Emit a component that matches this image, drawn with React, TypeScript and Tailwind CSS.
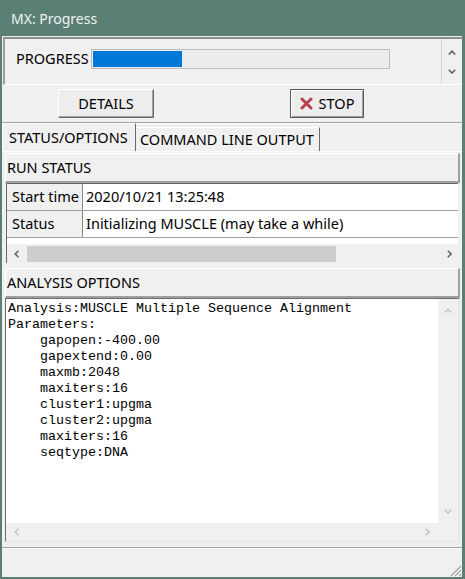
import React from "react";

type Dir = "up" | "down" | "left" | "right";

const arrowPaths: Record<Dir, string> = {
  up: "M0.8 4.5 L4 1.2 L7.2 4.5",
  down: "M0.8 0.8 L4 4.1 L7.2 0.8",
  left: "M4.5 0.8 L1.2 4 L4.5 7.2",
  right: "M0.8 0.8 L4.1 4 L0.8 7.2",
};

const Arrow = ({ dir, color }: { dir: Dir; color: string }) => {
  const vertical = dir === "up" || dir === "down";
  return (
    <svg
      width={vertical ? 8 : 5}
      height={vertical ? 5 : 8}
      viewBox={vertical ? "0 0 8 5" : "0 0 5 8"}
      fill="none"
      stroke={color}
      strokeWidth="1.5"
    >
      <path d={arrowPaths[dir]} />
    </svg>
  );
};

const SectionHeader = ({ title }: { title: string }) => (
  <div className="h-[30px] shrink-0 flex items-center pl-[1px] border-t border-l border-t-white border-l-white border-b-2 border-r-2 border-b-[#a0a0a0] border-r-[#a0a0a0]">
    {title}
  </div>
);

const InfoRow = ({ label, value }: { label: string; value: string }) => (
  <div className="h-[27px] flex border-b border-[#a0a0a0]">
    <div className="w-[76px] shrink-0 bg-[#f0f0f0] border-r border-[#8a8a8a] pl-[5px] flex items-center">
      {label}
    </div>
    <div className="flex-1 bg-white pl-[3px] flex items-center whitespace-nowrap">
      {value}
    </div>
  </div>
);

const options = [
  "Analysis:MUSCLE Multiple Sequence Alignment",
  "Parameters:",
  "    gapopen:-400.00",
  "    gapextend:0.00",
  "    maxmb:2048",
  "    maxiters:16",
  "    cluster1:upgma",
  "    cluster2:upgma",
  "    maxiters:16",
  "    seqtype:DNA",
];

export default function App() {
  return (
    <div className="w-[465px] h-[579px] bg-[#5b7f74] flex flex-col font-['Noto_Sans',sans-serif] text-[14.5px] text-black">
      <div className="h-[36px] shrink-0 flex items-center pl-[11px] text-[14px] text-[#eef3ef]">
        MX: Progress
      </div>

      <div className="flex-1 min-h-0 ml-[2px] mr-[3px] mb-[2px] bg-[#f0f0f0] flex flex-col">
        {/* progress panel */}
        <div className="mt-[1px] ml-[1px] h-[48px] shrink-0 flex border-t-2 border-l-2 border-t-[#8c8c8c] border-l-[#9c9c9c] border-b border-b-white">
          <div className="flex-1 flex items-center pl-[11px] pb-[5px]">
            <span>PROGRESS</span>
            <div className="ml-[2px] w-[299px] h-[20px] border border-[#bcbcbc] bg-[#ececec] p-[1px]">
              <div className="w-[89px] h-full bg-[#0078d7]" />
            </div>
          </div>
          <div className="w-[21px] border-l border-[#d6d6d6] flex flex-col items-center justify-between pt-[11px] pb-[10px]">
            <Arrow dir="up" color="#606060" />
            <Arrow dir="down" color="#606060" />
          </div>
        </div>

        {/* buttons */}
        <div className="h-[37px] shrink-0 flex items-start pt-[4px]">
          <button className="ml-[56px] w-[96px] h-[29px] bg-[#ededed] border border-t-white border-l-white border-b-[#6a6a6a] border-r-[#6a6a6a] shadow-[inset_-1px_-1px_0_#a0a0a0]">
            DETAILS
          </button>
          <button className="ml-[136px] w-[74px] h-[29px] bg-[#ededed] border border-[#5a5a5a] shadow-[inset_1px_1px_0_#ffffff,inset_-1px_-1px_0_#a0a0a0] flex items-center justify-center gap-[6px]">
            <svg width="13" height="13" viewBox="0 0 13 13">
              <path d="M2 2 L11 11 M11 2 L2 11" stroke="#b8404e" strokeWidth="3" strokeLinecap="round" />
            </svg>
            <span>STOP</span>
          </button>
        </div>

        <div className="h-[2px] shrink-0 border-t border-[#a0a0a0] border-b border-b-white" />

        {/* tabs */}
        <div className="h-[27px] shrink-0 flex items-end">
          <div className="h-[28px] w-[134px] border-t border-l border-white border-r border-r-[#6a6a6a] pl-[6px] flex items-center bg-[#f0f0f0]">
            STATUS/OPTIONS
          </div>
          <div className="h-[24px] w-[184px] border-t border-white border-r border-r-[#6a6a6a] pl-[4px] flex items-center">
            COMMAND LINE OUTPUT
          </div>
        </div>

        {/* tab content */}
        <div className="flex-1 min-h-0 flex flex-col pl-[3px] pr-[2px] pt-[1px] pb-[5px] border-t border-white">
          <SectionHeader title="RUN STATUS" />

          <div className="h-[80px] shrink-0 ml-[1px] mr-[2px] flex flex-col border-t border-l border-[#6a6a6a] bg-white">
            <InfoRow label="Start time" value="2020/10/21 13:25:48" />
            <InfoRow label="Status" value="Initializing MUSCLE (may take a while)" />
            <div className="flex-1" />
            <div className="h-[19px] bg-[#f0f0f0] flex items-center">
              <div className="w-[18px] flex justify-center">
                <Arrow dir="left" color="#606060" />
              </div>
              <div className="flex-1 h-full flex items-center">
                <div className="ml-[2px] w-[309px] h-[16px] bg-[#cdcdcd]" />
              </div>
              <div className="w-[18px] flex justify-center">
                <Arrow dir="right" color="#606060" />
              </div>
            </div>
          </div>

          <div className="h-[5px] shrink-0" />
          <SectionHeader title="ANALYSIS OPTIONS" />

          <div className="flex-1 min-h-0 flex flex-col border-t border-l border-[#6a6a6a] border-r-2 border-r-[#e6e6e6] border-b border-b-[#e6e6e6]">
            <div className="flex-1 min-h-0 flex">
              <pre className="flex-1 bg-white pl-[2px] pt-[2px] font-['Liberation_Mono',monospace] text-[13.33px] leading-[16px] text-black">
                {options.join("\n")}
              </pre>
              <div className="w-[20px] bg-[#f0f0f0] flex flex-col items-center justify-between pt-[9px] pb-[9px]">
                <Arrow dir="up" color="#c2c2c2" />
                <Arrow dir="down" color="#c2c2c2" />
              </div>
            </div>
            <div className="h-[18px] shrink-0 flex bg-[#f0f0f0]">
              <div className="flex-1 flex items-center justify-between pl-[8px] pr-[8px]">
                <Arrow dir="left" color="#c2c2c2" />
                <Arrow dir="right" color="#c2c2c2" />
              </div>
              <div className="w-[20px]" />
            </div>
          </div>
        </div>

        <div className="h-[2px] shrink-0 border-t border-[#a0a0a0] border-b border-b-white" />

        {/* status bar */}
        <div className="h-[28px] shrink-0 flex justify-end items-end">
          <svg width="14" height="14" viewBox="0 0 14 14">
            <path d="M13 3 L3 13 M13 7 L7 13 M13 11 L11 13" stroke="#a0a0a0" strokeWidth="1.2" />
            <path d="M14 4 L4 14 M14 8 L8 14" stroke="#ffffff" strokeWidth="1" />
          </svg>
        </div>
      </div>
    </div>
  );
}
